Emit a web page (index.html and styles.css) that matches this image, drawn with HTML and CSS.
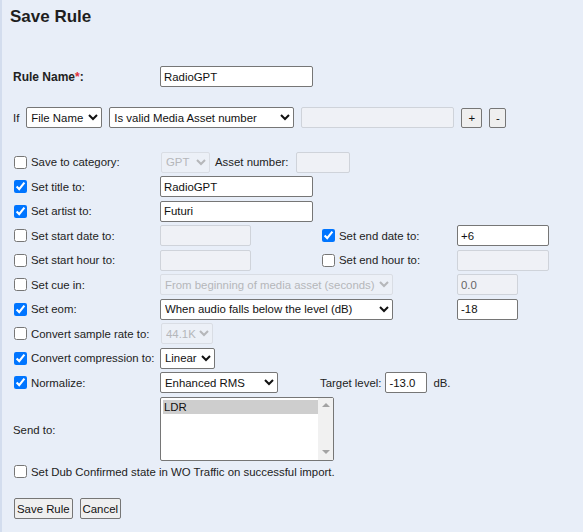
FILE: index.html
```html
<!DOCTYPE html>
<html>
<head>
<meta charset="utf-8">
<link rel="stylesheet" href="styles.css">
</head>
<body>
<div class="page">
  <h1 class="title">Save Rule</h1>

  <div class="name-row">
    <label class="name-label">Rule Name<span class="req">*</span>:</label>
    <input class="txt w153" type="text" value="RadioGPT">
  </div>

  <div class="if-row">
    <span class="if-text">If</span>
    <select class="sel w76"><option>File Name</option></select>
    <select class="sel w185"><option>Is valid Media Asset number</option></select>
    <input class="txt w153" type="text" disabled>
    <button class="btn small w21">+</button>
    <button class="btn small w17">-</button>
  </div>

  <div class="grid">
    <!-- row 1 -->
    <label class="chk"><input type="checkbox">Save to category:</label>
    <div class="cell span3 inline">
      <select class="sel w49 ml1" disabled><option>GPT</option></select>
      <span class="lbl asset">Asset number:</span>
      <input class="txt w54" type="text" disabled>
    </div>
    <!-- row 2 -->
    <label class="chk"><input type="checkbox" checked>Set title to:</label>
    <div class="cell span3"><input class="txt w153" type="text" value="RadioGPT"></div>
    <!-- row 3 -->
    <label class="chk"><input type="checkbox" checked>Set artist to:</label>
    <div class="cell span3"><input class="txt w153" type="text" value="Futuri"></div>
    <!-- row 4 -->
    <label class="chk"><input type="checkbox">Set start date to:</label>
    <div class="cell"><input class="txt w91" type="text" disabled></div>
    <label class="chk"><input type="checkbox" checked>Set end date to:</label>
    <div class="cell"><input class="txt w92" type="text" value="+6"></div>
    <!-- row 5 -->
    <label class="chk"><input type="checkbox">Set start hour to:</label>
    <div class="cell"><input class="txt w91" type="text" disabled></div>
    <label class="chk"><input type="checkbox">Set end hour to:</label>
    <div class="cell"><input class="txt w92" type="text" disabled></div>
    <!-- row 6 -->
    <label class="chk"><input type="checkbox">Set cue in:</label>
    <div class="cell span2"><select class="sel w233" disabled><option>From beginning of media asset (seconds)</option></select></div>
    <div class="cell"><input class="txt w61" type="text" value="0.0" disabled></div>
    <!-- row 7 -->
    <label class="chk"><input type="checkbox" checked>Set eom:</label>
    <div class="cell span2"><select class="sel w233"><option>When audio falls below the level (dB)</option></select></div>
    <div class="cell"><input class="txt w61" type="text" value="-18"></div>
    <!-- row 8 -->
    <label class="chk"><input type="checkbox">Convert sample rate to:</label>
    <div class="cell span3"><select class="sel w52 ml1" disabled><option>44.1K</option></select></div>
    <!-- row 9 -->
    <label class="chk"><input type="checkbox" checked>Convert compression to:</label>
    <div class="cell span3"><select class="sel w55"><option>Linear</option></select></div>
    <!-- row 10 -->
    <label class="chk"><input type="checkbox" checked>Normalize:</label>
    <div class="cell"><select class="sel w118"><option>Enhanced RMS</option></select></div>
    <div class="cell span2 inline">
      <span class="lbl target">Target level:</span>
      <input class="txt w42" type="text" value="-13.0">
      <span class="lbl db">dB.</span>
    </div>
    <!-- row 11 -->
    <span class="lbl send">Send to:</span>
    <div class="cell span3">
      <div class="listbox">
        <div class="options"><div class="option selected">LDR</div></div>
        <div class="scrollbar">
          <span class="arrow up"></span>
          <span class="arrow down"></span>
        </div>
      </div>
    </div>
  </div>

  <label class="chk dub"><input type="checkbox">Set Dub Confirmed state in WO Traffic on successful import.</label>

  <div class="actions">
    <button class="btn">Save Rule</button>
    <button class="btn">Cancel</button>
  </div>
</div>
</body>
</html>
```

FILE: styles.css
```css
html, body {
  margin: 0;
  padding: 0;
}
body {
  background: #e8eef8;
  font-family: "Liberation Sans", Arial, sans-serif;
  font-size: 11.4px;
  color: #222;
}
.page {
  min-height: 532px;
  box-sizing: border-box;
  border-left: 2px solid #d3ddee;
  padding: 7px 0 0 8px;
}
.title {
  margin: 0;
  font-size: 17px;
  line-height: 20px;
  font-weight: bold;
  color: #1e1e1e;
}
.name-row {
  display: flex;
  align-items: center;
  height: 21px;
  margin-top: 39px;
}
.name-label {
  width: 147px;
  padding-left: 3px;
  font-weight: bold;
  font-size: 12px;
}
.req { color: #e0303a; }
.if-row {
  display: flex;
  align-items: center;
  gap: 7px;
  height: 21px;
  margin-top: 20px;
  padding-left: 3px;
}
.grid {
  display: grid;
  grid-template-columns: 150px 158px 139px auto;
  grid-template-rows: repeat(10, 21px) 64px;
  row-gap: 3.5px;
  margin-top: 23.5px;
}
.grid > .send { align-self: center; margin-top: 3px; }
.cell {
  display: flex;
  align-items: center;
}
.span2 { grid-column: span 2; }
.span3 { grid-column: span 3; }
.inline { gap: 5px; }
.chk {
  display: flex;
  align-items: center;
  white-space: nowrap;
}
.chk input {
  width: 13px;
  height: 13px;
  margin: 0 4px 0 4px;
}
.lbl { white-space: nowrap; }
.send { padding-left: 3px; }
.target { margin-left: 2px; margin-right: -1px; }
.db { margin-left: 1px; }
.asset { margin-right: 3px; }
.txt {
  box-sizing: border-box;
  height: 21px;
  font-family: "Liberation Sans", Arial, sans-serif;
  font-size: 11.4px;
  color: #111;
  padding: 0 3px;
  border: 1px solid #767676;
  border-radius: 2px;
  background: #fff;
  margin: 0;
}
.txt:disabled {
  background: #eff1f6;
  border-color: #cfd3da;
  color: #666;
}
.sel {
  box-sizing: border-box;
  height: 21px;
  font-family: "Liberation Sans", Arial, sans-serif;
  font-size: 11.4px;
  color: #111;
  margin: 0;
  border: 1px solid #767676;
  border-radius: 2px;
  background-color: #fff;
}
.sel:disabled {
  color: #a0a0a0;
  border-color: #d3d6dc;
  background-color: #eef1f7;
}
.ml1 { margin-left: 1px; }
.w17 { width: 17px; }
.w21 { width: 21px; }
.w42 { width: 42px; }
.w49 { width: 49px; }
.w52 { width: 52px; }
.w54 { width: 54px; }
.w55 { width: 55px; }
.w61 { width: 61px; }
.w76 { width: 76px; }
.w91 { width: 91px; }
.w92 { width: 92px; }
.w118 { width: 118px; }
.w153 { width: 153px; }
.w185 { width: 185px; }
.w233 { width: 233px; }
.btn {
  box-sizing: border-box;
  height: 21px;
  font-family: "Liberation Sans", Arial, sans-serif;
  font-size: 11.4px;
  color: #111;
  background: #efefef;
  border: 1px solid #767676;
  border-radius: 2px;
  padding: 0 2px;
  margin: 0;
}
.btn.small {
  height: 20px;
  padding: 0;
}
.listbox {
  box-sizing: border-box;
  width: 174px;
  height: 64px;
  border: 1px solid #767676;
  border-radius: 2px;
  background: #fff;
  display: flex;
}
.options {
  flex: 1;
  padding: 2px 0 0 2px;
}
.option {
  height: 14px;
  line-height: 14px;
  padding-left: 1px;
  color: #111;
}
.option.selected { background: #cecece; }
.scrollbar {
  width: 15px;
  background: #f1f1f1;
  display: flex;
  flex-direction: column;
  justify-content: space-between;
  align-items: center;
  padding: 5px 0 6px;
}
.arrow {
  width: 0;
  height: 0;
  border-left: 4px solid transparent;
  border-right: 4px solid transparent;
}
.arrow.up { border-bottom: 4px solid #a3a3a3; }
.arrow.down { border-top: 4px solid #a3a3a3; }
.dub {
  height: 16px;
  margin-top: 3px;
}
.actions {
  display: flex;
  gap: 7px;
  margin-top: 18.5px;
  padding-left: 4px;
}
```
